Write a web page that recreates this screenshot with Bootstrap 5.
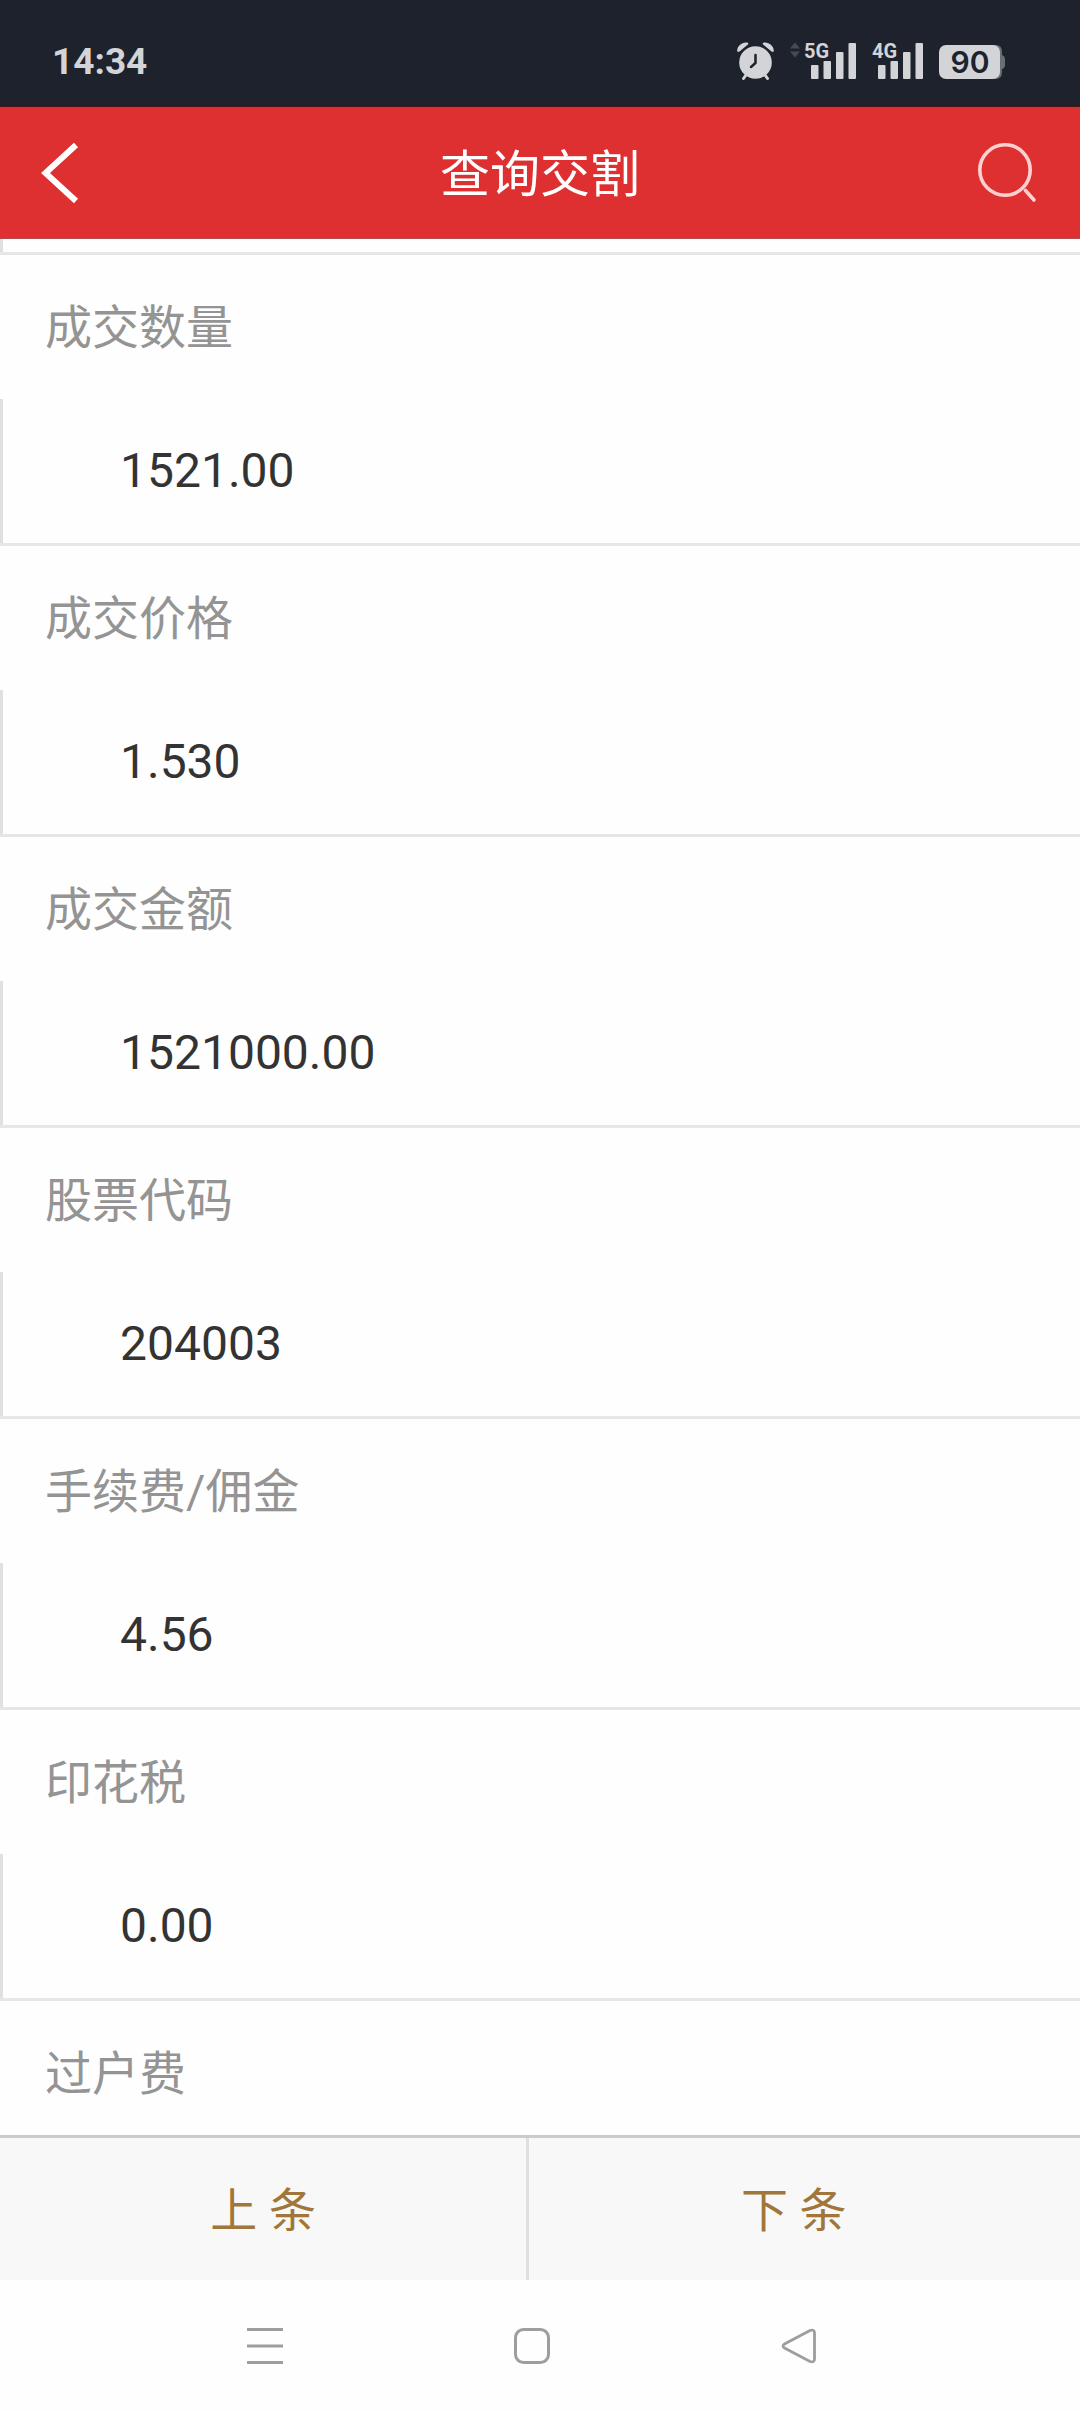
<!DOCTYPE html>
<html lang="zh-CN">
<head>
<meta charset="utf-8">
<meta name="viewport" content="width=device-width, initial-scale=1">
<title>查询交割</title>
<link href="https://cdn.jsdelivr.net/npm/bootstrap@5.3.0/dist/css/bootstrap.min.css" rel="stylesheet">
<style>
  body { font-family: Roboto, "Noto Sans CJK SC", sans-serif; color: #333; background: #fefefe; }
  svg { display: block; flex: none; }
  .status-bar { height: 107px; padding: 18px 74px 0 52px; background: #1e222d; color: #d3d4d7; border-bottom: 1px solid #4a1219; }
  .clock { font-size: 37px; line-height: 44px; font-weight: 700; }
  .status-icons { gap: 16px; }
  .title-bar { height: 132px; background: #de3031; padding: 0 40px; border-bottom: 1px solid #b44a4c; }
  .title-bar h1 { font-size: 50px; line-height: 72px; padding-top: 4px; font-weight: 400; color: #fff; }
  .field-name { font-size: 47px; line-height: 142px; padding: 2px 0 0 45px; font-weight: 400; color: #949494; }
  .field-value { font-size: 48px; line-height: 144px; padding-left: 117px; border-left: 3px solid #e0e0e0; }
  .field { border-bottom: 3px solid #e6e6e6; }
  .field-cut .field-value { height: 13px; }
  .pager { background: #f8f8f8; border-top: 3px solid #cbcbcb; }
  .pager .btn { width: 49%; height: 142px; font-size: 47px; line-height: 72px; color: #a0763a; padding: 4px 0 0; border: 0; }
  .pager .btn:first-child { border-right: 3px solid #e0e0e0; }
  .system-nav { height: 132px; padding-right: 16px; }
  .system-nav .btn { width: 267px; height: 132px; }
</style>
</head>
<body>
<div class="d-flex flex-column vh-100 overflow-hidden">
  <div class="status-bar d-flex align-items-center justify-content-between flex-shrink-0">
    <span class="clock">14:34</span>
    <div class="status-icons d-flex align-items-center">
      <svg width="37" height="52" viewBox="737 37 37 52" role="img" aria-label="闹钟">
        <g fill="#d3d4d7"><circle cx="755.500" cy="63.500" r="16.300"/>
        <path d="M737.500 53c-1.500-5 4-10.500 10-9.500l1 1.500-9 7.500zM773.500 53c1.500-5-4-10.500-10-9.500l-1 1.500 9 7.500z"/></g>
        <path d="M746 76l-2.500 3.500M765 76l2.500 3.500" stroke="#d3d4d7" stroke-width="3" stroke-linecap="round"/>
        <path d="M755.500 56v8l-4.500 4" fill="none" stroke="#1e222d" stroke-width="2.500" stroke-linecap="round"/>
      </svg>
      <svg width="66" height="52" viewBox="790 37 66 52" role="img" aria-label="5G 信号">
        <path d="M790 49.500l5-6 5 6zM790 52.500h10l-5 6z" fill="#474a54"/>
        <text x="804" y="59" font-size="20" font-weight="700" font-family="Roboto" fill="#d3d4d7">5G</text>
        <g fill="#d3d4d7"><rect x="811" y="66" width="7.500" height="14" rx="1"/><rect x="823.500" y="62" width="7.500" height="18" rx="1"/><rect x="836" y="53" width="7.500" height="27" rx="1"/><rect x="848.500" y="44" width="7.500" height="36" rx="1"/></g>
      </svg>
      <svg width="51" height="52" viewBox="871 37 51 52" role="img" aria-label="4G 信号">
        <text x="871" y="59" font-size="20" font-weight="700" font-family="Roboto" fill="#d3d4d7">4G</text>
        <g fill="#d3d4d7"><rect x="877" y="66" width="7.500" height="14" rx="1"/><rect x="889.500" y="62" width="7.500" height="18" rx="1"/><rect x="902" y="53" width="7.500" height="27" rx="1"/><rect x="914.500" y="44" width="7.500" height="36" rx="1"/></g>
      </svg>
      <svg width="67" height="52" viewBox="939 37 67 52" role="img" aria-label="电量 90">
        <path d="M994 46h2q6 0 6 7v3q3 1 3 4v6q0 3-3 4v3q0 7-6 7h-2z" fill="#6a6d74"/>
        <rect x="939" y="46" width="61" height="34" rx="7" fill="#d3d4d7"/>
        <text x="970" y="74" text-anchor="middle" font-size="30" font-weight="600" font-family="Inter" fill="#1e222d">90</text>
      </svg>
    </div>
  </div>

  <header class="title-bar d-flex align-items-center justify-content-between flex-shrink-0">
    <button type="button" class="btn border-0 p-0" aria-label="返回">
      <svg width="62" height="62" viewBox="40 142 62 62"><path d="M76 145L45.500 173 76 201" fill="none" stroke="#fff" stroke-width="6"/></svg>
    </button>
    <h1 class="mb-0">查询交割</h1>
    <button type="button" class="btn border-0 p-0" aria-label="搜索">
      <svg width="62" height="62" viewBox="978 142 62 62"><circle cx="1005" cy="170" r="25.200" fill="none" stroke="#ffd0d0" stroke-width="3.600"/><path d="M1025.500 190.500l8.500 9.500" stroke="#ffd0d0" stroke-width="3.600" stroke-linecap="round"/></svg>
    </button>
  </header>

  <main class="flex-grow-1 overflow-hidden">
    <dl class="m-0">
      <div class="field field-cut"><dd class="field-value m-0"></dd></div>
      <div class="field"><dt class="field-name">成交数量</dt><dd class="field-value m-0">1521.00</dd></div>
      <div class="field"><dt class="field-name">成交价格</dt><dd class="field-value m-0">1.530</dd></div>
      <div class="field"><dt class="field-name">成交金额</dt><dd class="field-value m-0">1521000.00</dd></div>
      <div class="field"><dt class="field-name">股票代码</dt><dd class="field-value m-0">204003</dd></div>
      <div class="field"><dt class="field-name">手续费/佣金</dt><dd class="field-value m-0">4.56</dd></div>
      <div class="field"><dt class="field-name">印花税</dt><dd class="field-value m-0">0.00</dd></div>
      <div class="field"><dt class="field-name">过户费</dt></div>
    </dl>
  </main>

  <footer class="pager d-flex flex-shrink-0">
    <button type="button" class="btn rounded-0">上 条</button>
    <button type="button" class="btn rounded-0">下 条</button>
  </footer>

  <nav class="system-nav d-flex justify-content-center flex-shrink-0" aria-label="系统导航">
    <button type="button" class="btn border-0 p-0 d-flex align-items-center justify-content-center" aria-label="最近任务">
      <svg width="36" height="36" viewBox="0 0 36 36"><path d="M0 1.500h36M0 18h36M0 34.500h36" stroke="#9e9e9e" stroke-width="3"/></svg>
    </button>
    <button type="button" class="btn border-0 p-0 d-flex align-items-center justify-content-center" aria-label="主屏幕">
      <svg width="36" height="36" viewBox="0 0 36 36"><rect x="1.500" y="1.500" width="33" height="33" rx="8" fill="none" stroke="#9e9e9e" stroke-width="3"/></svg>
    </button>
    <button type="button" class="btn border-0 p-0 d-flex align-items-center justify-content-center" aria-label="返回上一级">
      <svg width="36" height="36" viewBox="0 0 36 36"><path d="M29 2.500L3.500 16q-3 2 0 4L29 33.500q4.500 1.500 4.500-2.500V5q0-4-4.500-2.500z" fill="none" stroke="#9e9e9e" stroke-width="2.800"/></svg>
    </button>
  </nav>
</div>
<script src="https://cdn.jsdelivr.net/npm/bootstrap@5.3.0/dist/js/bootstrap.bundle.min.js"></script>
</body>
</html>
